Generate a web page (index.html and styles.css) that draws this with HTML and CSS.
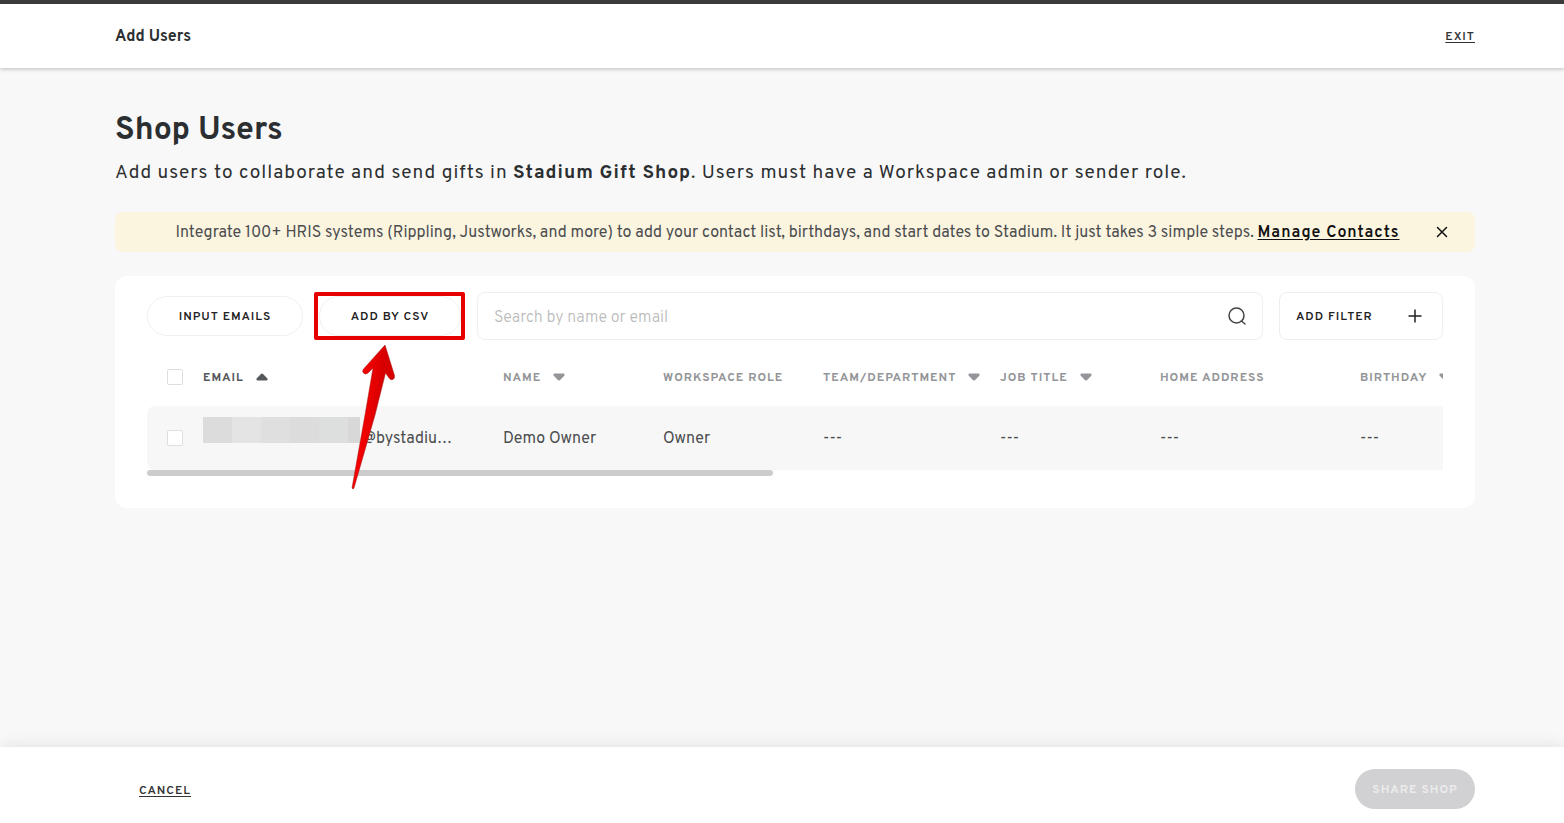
FILE: index.html
```html
<!DOCTYPE html>
<html lang="en">
  <head>
    <meta charset="UTF-8" />
    <meta name="viewport" content="width=device-width, initial-scale=1.0" />
    <title>Add Users</title>
    <link rel="stylesheet" href="styles.css">
  </head>
  <body>
    <header class="topbar">
      <span class="topbar-title">Add Users</span>
      <a href="#" class="link exit">EXIT</a>
    </header>

    <main class="content">
      <h1>Shop Users</h1>
      <p class="subtitle">
        Add users to collaborate and send gifts in
        <strong>Stadium Gift Shop</strong>. Users must have a Workspace admin or
        sender role.
      </p>

      <div class="banner">
        <p>
          Integrate 100+ HRIS systems (Rippling, Justworks, and more) to add your
          contact list, birthdays, and start dates to Stadium. It just takes 3
          simple steps. <a href="#">Manage Contacts</a>
        </p>
        <button type="button" class="close" aria-label="Close">
          <svg width="12" height="12" viewBox="0 0 12 12">
            <path d="M1.5 1.5l9 9M10.5 1.5l-9 9" stroke="#111" stroke-width="1.5" stroke-linecap="round" />
          </svg>
        </button>
      </div>

      <section class="card">
        <div class="toolbar">
          <button type="button" class="pill pill-emails">INPUT EMAILS</button>
          <div class="csv">
            <button type="button" class="pill pill-csv">ADD BY CSV</button>
            <div class="highlight"></div>
            <svg class="arrow" width="48" height="148" viewBox="0 0 48 148">
              <defs>
                <linearGradient id="red" x1="0" y1="0" x2="1" y2="0.25">
                  <stop offset="0.35" stop-color="#f40000" />
                  <stop offset="0.75" stop-color="#d60000" />
                </linearGradient>
              </defs>
              <path d="M35 1L44.5 31.5Q45 34.5 43 35.5Q40.5 36.5 39 34L35.5 29L25 71L4 144Q3 146 2 144L15 71L23 24L18 29Q15.500 31 13.5 29Q11.5 27 14 24.5Z" fill="url(#red)" stroke="#a31515" stroke-width="0.5" />
            </svg>
          </div>
          <div class="search">
            <input type="text" aria-label="Search by name or email" placeholder="Search by name or email" />
            <svg width="18" height="18" viewBox="0 0 18 18" fill="none" stroke="#444" stroke-width="1.5">
              <circle cx="8.5" cy="8.5" r="7.5" />
              <path d="M13.5 14l3.5 3" stroke-linecap="round" />
            </svg>
          </div>
          <button type="button" class="filter">
            <span>ADD FILTER</span>
            <svg width="14" height="14" viewBox="0 0 14 14">
              <path d="M7 0.5v13M0.5 7h13" stroke="#222" stroke-width="1.5" />
            </svg>
          </button>
        </div>

        <div class="table-wrap">
          <table>
            <colgroup>
              <col class="col-check" />
              <col class="col-email" />
              <col class="col-name" />
              <col class="col-name" />
              <col class="col-team" />
              <col class="col-name" />
              <col class="col-address" />
              <col class="col-name" />
            </colgroup>
            <thead>
              <tr>
                <th class="check"><input type="checkbox" aria-label="Select all" /></th>
                <th class="sorted">EMAIL <svg class="caret" width="12" height="8" viewBox="0 0 12 8"><path d="M6 0.5Q7 0.5 8 2L11.5 5.5Q12 7.5 10.5 7.5H1.5Q0 7.5 0.5 5.5L4 2Q5 0.5 6 0.5Z" /></svg></th>
                <th>NAME <svg class="caret" width="12" height="8" viewBox="0 0 12 8"><path d="M6 7.5Q7 7.5 8 6L11.5 2.5Q12 0.5 10.5 0.5H1.5Q0 0.5 0.5 2.5L4 6Q5 7.5 6 7.5Z" /></svg></th>
                <th>WORKSPACE ROLE</th>
                <th>TEAM/DEPARTMENT <svg class="caret" width="12" height="8" viewBox="0 0 12 8"><path d="M6 7.5Q7 7.5 8 6L11.5 2.5Q12 0.5 10.5 0.5H1.5Q0 0.5 0.5 2.5L4 6Q5 7.5 6 7.5Z" /></svg></th>
                <th>JOB TITLE <svg class="caret" width="12" height="8" viewBox="0 0 12 8"><path d="M6 7.5Q7 7.5 8 6L11.5 2.5Q12 0.5 10.5 0.5H1.5Q0 0.5 0.5 2.5L4 6Q5 7.5 6 7.5Z" /></svg></th>
                <th>HOME ADDRESS</th>
                <th>BIRTHDAY <svg class="caret" width="12" height="8" viewBox="0 0 12 8"><path d="M6 7.5Q7 7.5 8 6L11.5 2.5Q12 0.5 10.5 0.5H1.5Q0 0.5 0.5 2.5L4 6Q5 7.5 6 7.5Z" /></svg></th>
              </tr>
            </thead>
            <tbody>
              <tr>
                <td class="check"><input type="checkbox" aria-label="Select Demo Owner" /></td>
                <td class="email"><span class="mask"></span>@bystadiu…</td>
                <td>Demo Owner</td>
                <td>Owner</td>
                <td>---</td>
                <td>---</td>
                <td>---</td>
                <td>---</td>
              </tr>
            </tbody>
          </table>
        </div>
        <div class="scroll-thumb"></div>
      </section>
    </main>

    <footer class="footer">
      <a href="#" class="link cancel">CANCEL</a>
      <button type="button" class="share" disabled>SHARE SHOP</button>
    </footer>
  </body>
</html>
```
FILE: styles.css
```css
* {
  box-sizing: border-box;
}
body {
  margin: 0;
  min-height: 100vh;
  display: flex;
  flex-direction: column;
  background: #f8f8f8;
  color: #2c2f31;
  font-family: Overpass, Roboto, sans-serif;
  font-size: 16px;
}
button,
input {
  font-family: inherit;
}
button {
  cursor: pointer;
}
.topbar {
  height: 68px;
  display: flex;
  align-items: center;
  justify-content: space-between;
  padding: 2px 89px 0 115px;
  background: #fff;
  border-top: 4px solid #3b3b3b;
  box-shadow: 0 1px 4px rgba(0, 0, 0, 0.25);
}
.topbar-title {
  font-weight: 700;
}
.link {
  color: #333;
  font-size: 12px;
  font-weight: 600;
  letter-spacing: 1px;
  text-underline-offset: 2px;
}
.content {
  flex: 1;
  padding: 43px 89px 40px 115px;
}
h1 {
  margin: 0;
  font-size: 32px;
  line-height: 40px;
}
.subtitle {
  margin: 6px 0 23px;
  font-size: 19px;
  line-height: 32px;
  letter-spacing: 1px;
}
.banner {
  height: 40px;
  display: flex;
  align-items: center;
  padding: 0 27px 0 24px;
  background: #fbf4df;
  border-radius: 8px;
  color: #4b4d4f;
}
.banner p {
  flex: 1;
  margin: 0;
  padding-top: 2px;
  text-align: center;
}
.banner a {
  color: #111;
  font-weight: 600;
  letter-spacing: 1px;
  text-underline-offset: 2px;
}
.close {
  display: flex;
  padding: 0;
  border: none;
  background: none;
}
.card {
  margin-top: 24px;
  padding: 16px 32px 32px;
  background: #fff;
  border-radius: 12px;
}
.toolbar {
  display: flex;
  align-items: center;
  gap: 16px;
}
.pill {
  height: 40px;
  padding: 2px 0 0;
  background: #fff;
  border: 1px solid #f0f0f0;
  border-radius: 20px;
  color: #222;
  font-size: 12px;
  font-weight: 600;
  letter-spacing: 1px;
  white-space: nowrap;
}
.pill-emails {
  width: 156px;
}
.pill-csv {
  width: 142px;
}
.csv {
  position: relative;
}
/* red marker and arrow drawn over the CSV button */
.highlight {
  position: absolute;
  inset: -4px -4px -4px -5px;
  border: 4px solid #e60000;
  border-radius: 2px;
  pointer-events: none;
}
.arrow {
  position: absolute;
  top: 48px;
  left: 31px;
  z-index: 1;
  pointer-events: none;
}
.search {
  flex: 1;
  height: 48px;
  display: flex;
  align-items: center;
  padding: 0 16px;
  border: 1px solid #eee;
  border-radius: 8px;
}
.search input {
  flex: 1;
  padding: 3px 0 0;
  border: none;
  outline: none;
  font-size: 16px;
}
.search input::placeholder {
  color: #bbb;
  font-weight: 300;
}
.filter {
  width: 164px;
  height: 48px;
  display: flex;
  align-items: center;
  justify-content: space-between;
  padding: 0 20px 0 16px;
  background: #fff;
  border: 1px solid #eee;
  border-radius: 8px;
  color: #222;
  font-size: 12px;
  font-weight: 600;
  letter-spacing: 1px;
}
.filter span {
  padding-top: 2px;
}
.table-wrap {
  margin-top: 8px;
  overflow: hidden;
}
table {
  width: 1373px;
  table-layout: fixed;
  border-collapse: collapse;
}
.col-check {
  width: 56px;
}
.col-email {
  width: 300px;
}
.col-name {
  width: 160px;
}
.col-team {
  width: 177px;
}
.col-address {
  width: 200px;
}
th,
td {
  padding: 2px 0 0;
  text-align: left;
  white-space: nowrap;
}
.check {
  padding: 0 20px;
}
th {
  height: 58px;
  color: #939598;
  font-size: 12px;
  font-weight: 700;
  letter-spacing: 1px;
}
.sorted {
  color: #55585a;
}
.caret {
  margin-left: 8px;
  fill: currentColor;
}
td {
  height: 64px;
  background: #f7f7f7;
  color: #4b4d4f;
}
td:first-child {
  border-radius: 8px 0 0 8px;
}
input[type="checkbox"] {
  appearance: none;
  display: block;
  width: 16px;
  height: 16px;
  margin: 0;
  background: #fff;
  border: 1px solid #dcdee2;
  border-radius: 2px;
}
.email {
  position: relative;
  padding-left: 160px;
}
.mask {
  position: absolute;
  left: 0;
  top: 11px;
  width: 157px;
  height: 26px;
  background: linear-gradient(
    to right,
    #dcdcdc 29px,
    #e4e4e4 29px 58px,
    #dfdfdf 58px 87px,
    #dcdcdc 87px 116px,
    #dcdfde 116px 145px,
    #d8d8d8 145px
  );
}
.scroll-thumb {
  width: 626px;
  height: 6px;
  background: #cbcccd;
  border-radius: 3px;
}
.footer {
  height: 76px;
  display: flex;
  align-items: center;
  justify-content: space-between;
  padding: 8px 89px 0 139px;
  background: #fff;
  box-shadow: 0 0 16px rgba(0, 0, 0, 0.1);
}
.cancel {
  padding-top: 3px;
}
.share {
  width: 120px;
  height: 40px;
  padding: 2px 0 0;
  border: none;
  border-radius: 20px;
  background: #d1d1d3;
  color: #ebebeb;
  font-size: 12px;
  font-weight: 700;
  letter-spacing: 1px;
}
```
